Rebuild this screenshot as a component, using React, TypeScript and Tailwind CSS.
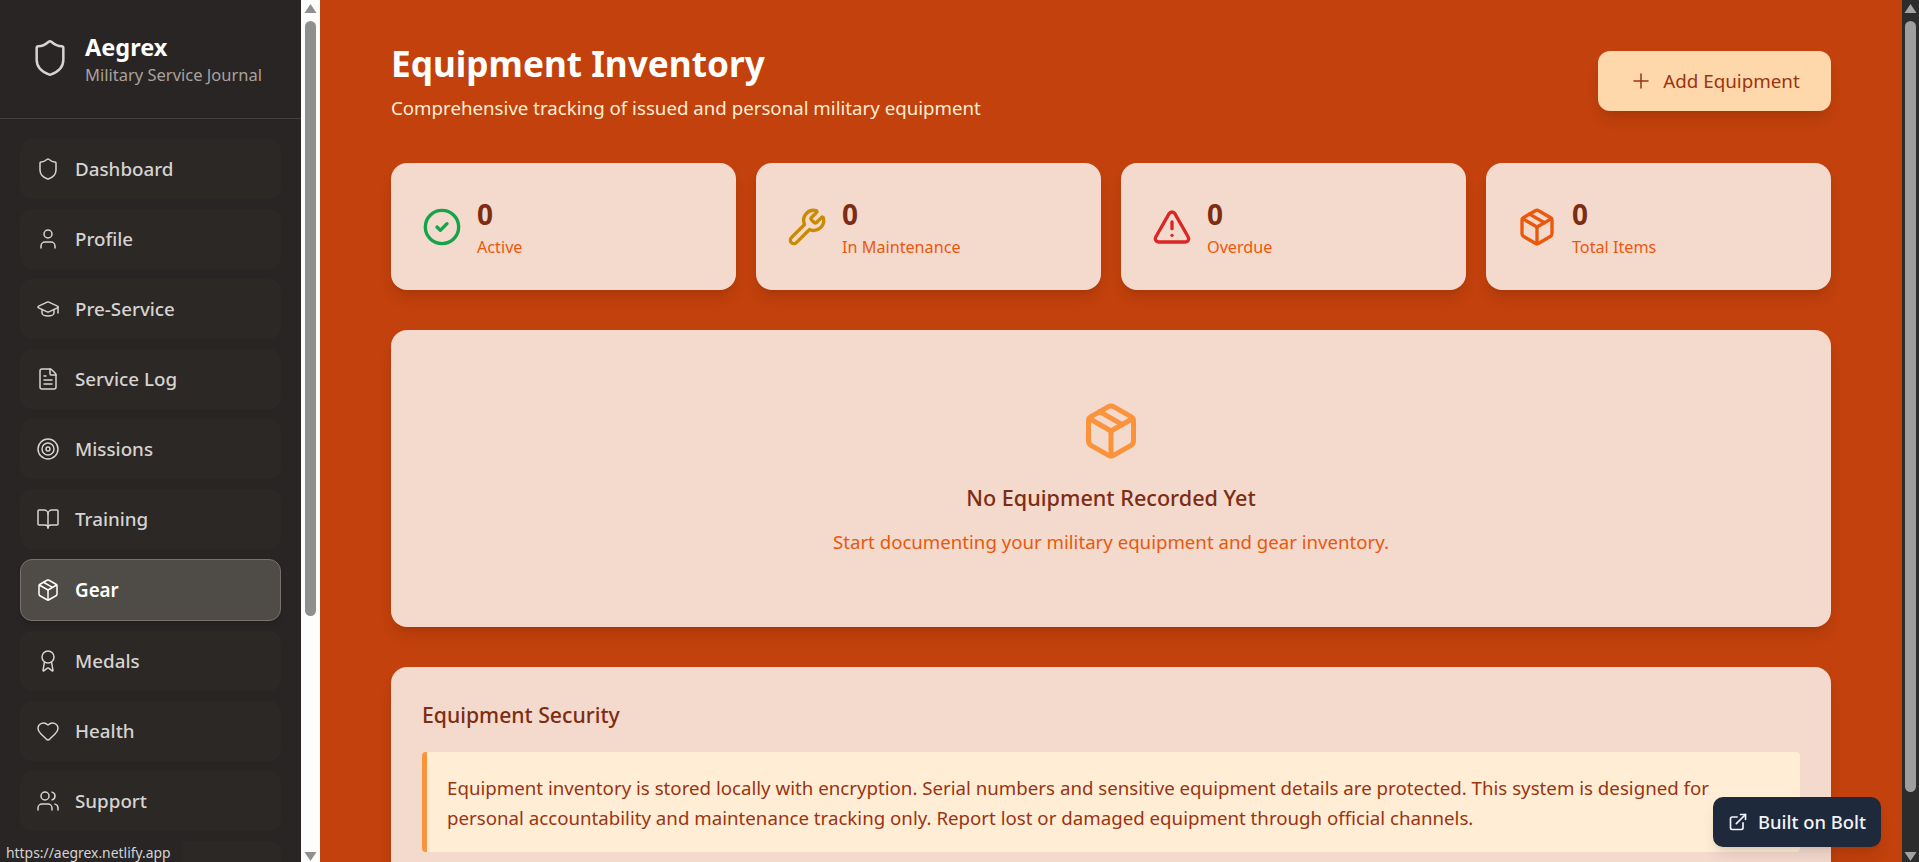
import React from "react";
import {
  Shield, User, GraduationCap, FileText, Target, BookOpen, Package, Award, Heart, Users,
  CircleCheck, Wrench, TriangleAlert, Plus, ExternalLink,
} from "lucide-react";

const FONT = "font-['Noto_Sans','Open_Sans',sans-serif]";

const nav = [
  { label: "Dashboard", Icon: Shield },
  { label: "Profile", Icon: User },
  { label: "Pre-Service", Icon: GraduationCap },
  { label: "Service Log", Icon: FileText },
  { label: "Missions", Icon: Target },
  { label: "Training", Icon: BookOpen },
  { label: "Gear", Icon: Package, active: true },
  { label: "Medals", Icon: Award },
  { label: "Health", Icon: Heart },
  { label: "Support", Icon: Users },
];

const stats = [
  { label: "Active", Icon: CircleCheck, color: "text-[#16a34a]" },
  { label: "In Maintenance", Icon: Wrench, color: "text-[#ca8a04]" },
  { label: "Overdue", Icon: TriangleAlert, color: "text-[#dc2626]" },
  { label: "Total Items", Icon: Package, color: "text-[#ea580c]" },
];

function Bar({ light, thumbClass }: { light: boolean; thumbClass: string }) {
  const arrow = light ? "#8f8f8f" : "#a3a3a3";
  return (
    <div className={`flex h-full shrink-0 flex-col items-center ${light ? "w-[19px] bg-[#fdfdfd]" : "w-[17px] bg-[#2c2c2c]"}`}>
      <svg width="13" height="21" viewBox="0 0 13 21" className="shrink-0"><path d="M6.5 4 L12.5 13 H.5 Z" fill={arrow} /></svg>
      <div className={`w-[11px] shrink-0 rounded-full ${thumbClass}`} />
      <div className="flex-1" />
      <svg width="13" height="17" viewBox="0 0 13 17" className="shrink-0"><path d="M6.5 16 L12.5 7 H.5 Z" fill={arrow} /></svg>
    </div>
  );
}

export default function App() {
  return (
    <div className={`relative flex h-screen w-full overflow-hidden bg-[#c2410c] ${FONT}`}>
      <aside className="flex h-full w-[301px] shrink-0 flex-col overflow-hidden bg-[#292524]">
        <div className="flex h-[119px] shrink-0 items-center gap-[15px] border-b border-[#44403c] pb-[2px] pl-[30px]">
          <Shield size={40} strokeWidth={1.5} className="text-[#d6d3d1]" />
          <div className="pt-[3px]">
            <div className="text-[23.5px] leading-[30px] font-bold text-white">Aegrex</div>
            <div className="mt-px text-[16.5px] leading-[24px] text-[#a8a29e]">Military Service Journal</div>
          </div>
        </div>
        <nav className="flex flex-col gap-[10px] px-5 pt-5">
          {nav.map(({ label, Icon, active }) => (
            <div
              key={label}
              className={
                active
                  ? "flex h-[62px] shrink-0 items-center gap-[15px] rounded-[12px] border border-[#78716c] bg-[#4f4b47] pl-[15px] text-[18.8px] font-semibold text-white shadow-md"
                  : "flex h-[60px] shrink-0 items-center gap-[15px] rounded-[12px] bg-[#2c2826] pl-[16px] text-[18.8px] font-medium text-[#d6d3d1]"
              }
            >
              <Icon size={24} strokeWidth={1.5} />
              <span>{label}</span>
            </div>
          ))}
          <div className="h-[60px] shrink-0 rounded-[12px] bg-[#2c2826]" />
        </nav>
      </aside>
      <Bar light thumbClass="h-[595px] bg-[#8f8f8f]" />
      <main className="h-full min-w-0 flex-1 overflow-hidden">
        <div className="mx-auto w-[1440px] pt-[51px]">
          <header className="flex items-start justify-between">
            <div>
              <h1 className="-mt-[10px] text-[35.2px] leading-[44px] font-bold text-white">Equipment Inventory</h1>
              <p className="mt-[9px] text-[18.7px] leading-[28px] text-[#ffedd5]">Comprehensive tracking of issued and personal military equipment</p>
            </div>
            <button className="flex h-[60px] w-[233px] items-center justify-center gap-[10px] rounded-[12px] bg-[#fed7aa] text-[18.8px] font-normal text-[#9a3412] shadow-lg">
              <Plus size={24} strokeWidth={1.5} />
              Add Equipment
            </button>
          </header>
          <section className="mt-[41px] grid grid-cols-4 gap-5">
            {stats.map(({ label, Icon, color }) => (
              <div key={label} className="flex h-[127px] items-center gap-[15px] rounded-[16px] bg-[#f4d9cd] pl-[31px] shadow-lg">
                <Icon size={40} strokeWidth={2} className={color} />
                <div className="pt-px">
                  <div className="text-[28px] leading-[36px] font-bold text-[#7c2d12]">0</div>
                  <div className="mt-[3px] text-[16.2px] leading-[24px] text-[#ea580c]">{label}</div>
                </div>
              </div>
            ))}
          </section>
          <section className="mt-10 flex h-[297px] flex-col items-center rounded-[16px] bg-[#f4d9cd] pt-[71px] shadow-lg">
            <Package size={60} strokeWidth={2} className="text-[#fb923c]" />
            <h3 className="mt-[22px] text-[21.6px] leading-[30px] font-medium text-[#7c2d12]">No Equipment Recorded Yet</h3>
            <p className="mt-[15px] text-[18.65px] leading-[28px] text-[#ea580c]">Start documenting your military equipment and gear inventory.</p>
          </section>
          <section className="mt-10 rounded-[16px] bg-[#f4d9cd] p-[31px] shadow-lg">
            <h3 className="text-[21.2px] leading-[34px] font-medium text-[#7c2d12]">Equipment Security</h3>
            <div className="mt-[20px] rounded-[4px] border-l-[5px] border-[#fb923c] bg-[#ffedd5] px-5 pt-[21px] pb-[19px] text-[18.7px] leading-[30px] text-[#9a3412]">
              Equipment inventory is stored locally with encryption. Serial numbers and sensitive equipment details are protected. This system is designed for personal accountability and maintenance tracking only. Report lost or damaged equipment through official channels.
            </div>
          </section>
        </div>
      </main>
      <Bar light={false} thumbClass="h-[771px] bg-[#9e9e9e]" />
      <div className="absolute bottom-0 left-0 h-[22px] w-[182px] rounded-tr-[4px] bg-[#292524] pt-[3px] pl-[6px] text-[13.9px] leading-[20px] text-[#d4d4d4]">https://aegrex.netlify.app</div>
      <div className="absolute top-[797px] left-[1713px] flex h-[50px] w-[168px] items-center justify-center gap-[10px] rounded-[10px] bg-[#1e293b] text-[18.4px] font-medium text-[#f1f5f9] shadow-lg">
        <ExternalLink size={20} strokeWidth={2} />
        Built on Bolt
      </div>
    </div>
  );
}
